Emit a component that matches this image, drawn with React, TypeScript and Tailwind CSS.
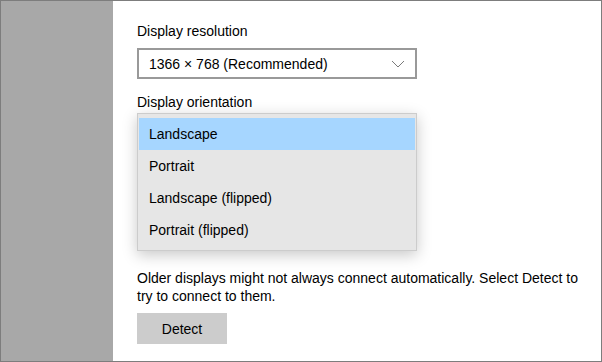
const options = ["Landscape", "Portrait", "Landscape (flipped)", "Portrait (flipped)"];

const Chevron = () => (
  <svg width="14" height="8" viewBox="0 0 14 8" fill="none">
    <path d="M1 1l6 6 6-6" stroke="#7a7a7a" strokeWidth="1" />
  </svg>
);

export default function App() {
  return (
    <div
      className="w-[602px] h-[362px] flex border border-[#7d7d7d] bg-white text-black overflow-hidden"
      style={{ fontFamily: '"Liberation Sans", Arial, sans-serif' }}
    >
      {/* left nav strip */}
      <div className="w-[112px] shrink-0 bg-[#a8a8a8]" />

      <div className="relative flex-1 pl-[24px] pt-[20px] text-[14px] leading-[20px]">
        <p>Display resolution</p>
        <div className="mt-[7px] w-[280px] h-[31px] border-2 border-[#999999] flex items-center justify-between pl-[10px] pr-[10px]">
          <span>1366 × 768 (Recommended)</span>
          <Chevron />
        </div>

        <p className="mt-[13px]">Display orientation</p>
        <div className="relative mt-[2px] w-[280px] h-[31px] border-2 border-[#999999]">
          {/* open menu */}
          <div className="absolute left-[-2px] top-[-3px] w-[280px] bg-[#e6e6e6] border border-[#cccccc] pt-[4px] pb-[4px] shadow-[0_4px_14px_rgba(0,0,0,0.22)] z-10">
            {options.map((o, i) => (
              <div
                key={o}
                className={
                  i === 0
                    ? "h-[32px] mx-px flex items-center pl-[10px] bg-[#a6d6ff]"
                    : "h-[32px] mx-px flex items-center pl-[10px]"
                }
              >
                {o}
              </div>
            ))}
          </div>
        </div>

        <p className="mt-[124px] w-[450px] leading-[18px]">
          Older displays might not always connect automatically. Select Detect to try to connect to them.
        </p>
        <button className="mt-[8px] w-[90px] h-[31px] bg-[#cccccc] text-[14px]">Detect</button>
      </div>
    </div>
  );
}
